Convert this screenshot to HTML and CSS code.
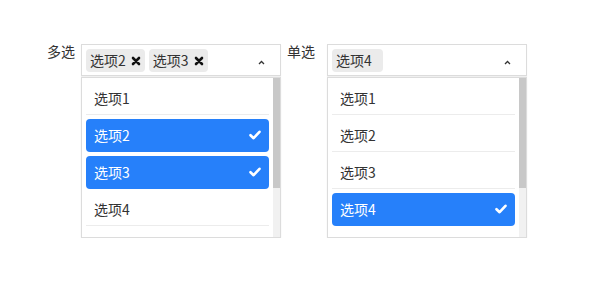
FILE: index.html
```html
<!DOCTYPE html>
<html lang="zh">
<head>
<meta charset="utf-8">
<link rel="stylesheet" href="styles.css">
</head>
<body>
<div class="page">
  <div class="field field-multi">
    <div class="label">多选</div>
    <div class="select">
      <div class="control">
        <span class="tag">选项2<svg class="tag-x" viewBox="0 0 10 10"><path d="M2 2L8 8M8 2L2 8"/></svg></span>
        <span class="tag">选项3<svg class="tag-x" viewBox="0 0 10 10"><path d="M2 2L8 8M8 2L2 8"/></svg></span>
        <svg class="caret" viewBox="0 0 7 5"><path d="M1 4L3.5 1.5L6 4"/></svg>
      </div>
      <div class="menu">
        <ul class="list">
          <li class="opt"><div class="opt-in">选项1</div></li>
          <li class="opt"><div class="opt-in sel">选项2<svg class="check" viewBox="0 0 12 10"><path d="M1.5 5.2L4.6 8.2L10.5 1.8"/></svg></div></li>
          <li class="opt"><div class="opt-in sel">选项3<svg class="check" viewBox="0 0 12 10"><path d="M1.5 5.2L4.6 8.2L10.5 1.8"/></svg></div></li>
          <li class="opt"><div class="opt-in">选项4</div></li>
        </ul>
        <div class="scrollbar"><div class="thumb"></div></div>
      </div>
    </div>
  </div>
  <div class="field field-single">
    <div class="label">单选</div>
    <div class="select">
      <div class="control">
        <span class="tag tag-single">选项4</span>
        <svg class="caret" viewBox="0 0 7 5"><path d="M1 4L3.5 1.5L6 4"/></svg>
      </div>
      <div class="menu">
        <ul class="list">
          <li class="opt"><div class="opt-in">选项1</div></li>
          <li class="opt"><div class="opt-in">选项2</div></li>
          <li class="opt"><div class="opt-in">选项3</div></li>
          <li class="opt"><div class="opt-in sel">选项4<svg class="check" viewBox="0 0 12 10"><path d="M1.5 5.2L4.6 8.2L10.5 1.8"/></svg></div></li>
        </ul>
        <div class="scrollbar"><div class="thumb"></div></div>
      </div>
    </div>
  </div>
</div>
</body>
</html>
```
FILE: styles.css
```css
html, body {
  margin: 0;
  padding: 0;
  background: #fff;
}
body {
  font-family: "Noto Sans CJK SC", "Noto Sans", sans-serif;
  font-size: 14px;
  color: #333;
}
.page {
  display: flex;
  align-items: flex-start;
  padding: 44px 0 0 47px;
}
.field {
  display: flex;
  align-items: flex-start;
}
.field-single {
  margin-left: 6px;
}
.label {
  line-height: 18px;
  margin-top: -2px;
  color: #333;
}
.field-multi .label { width: 34px; }
.field-single .label { width: 40px; }
.select {
  width: 200px;
}
.control {
  box-sizing: border-box;
  height: 32px;
  border: 1px solid #dcdcdc;
  box-shadow: 0 1px 1px rgba(0,0,0,0.06);
  display: flex;
  align-items: flex-start;
  padding: 4px 4px 0 4px;
  gap: 4px;
}
.tag {
  display: inline-flex;
  align-items: center;
  height: 23px;
  background: #ebebeb;
  border-radius: 4px;
  padding: 0 4px;
  line-height: 23px;
  color: #333;
}
.tag-single {
  padding-right: 11px;
}
.tag-x {
  width: 10px;
  height: 10px;
  margin-left: 5px;
  fill: none;
  stroke: #111;
  stroke-width: 2.6;
  stroke-linecap: round;
}
.caret {
  width: 7px;
  height: 5px;
  margin-left: auto;
  margin-right: 11px;
  margin-top: 11px;
  fill: none;
  stroke: #333;
  stroke-width: 1.3;
}
.menu {
  margin-top: 1px;
  border: 1px solid #dcdcdc;
  height: 159px;
  overflow: hidden;
  display: flex;
  box-shadow: 0 1px 2px rgba(0,0,0,0.05);
}
.list {
  flex: 1;
  list-style: none;
  margin: 0;
  padding: 2px 0;
}
.scrollbar {
  width: 7px;
  background: #f1f1f1;
}
.thumb {
  height: 110px;
  background: #c8c8c8;
}
.opt {
  padding: 2px 4px;
}
.opt-in {
  height: 32px;
  border-bottom: 1px solid #ececec;
  display: flex;
  align-items: center;
  padding: 0 8px;
  line-height: 20px;
}
.opt-in.sel {
  background: #2680fa;
  color: #fff;
  border-bottom-color: transparent;
  border-radius: 4px;
}
.check {
  width: 12px;
  height: 10px;
  margin-left: auto;
  fill: none;
  stroke: #fff;
  stroke-width: 2.6;
  stroke-linecap: round;
  stroke-linejoin: round;
}
```
